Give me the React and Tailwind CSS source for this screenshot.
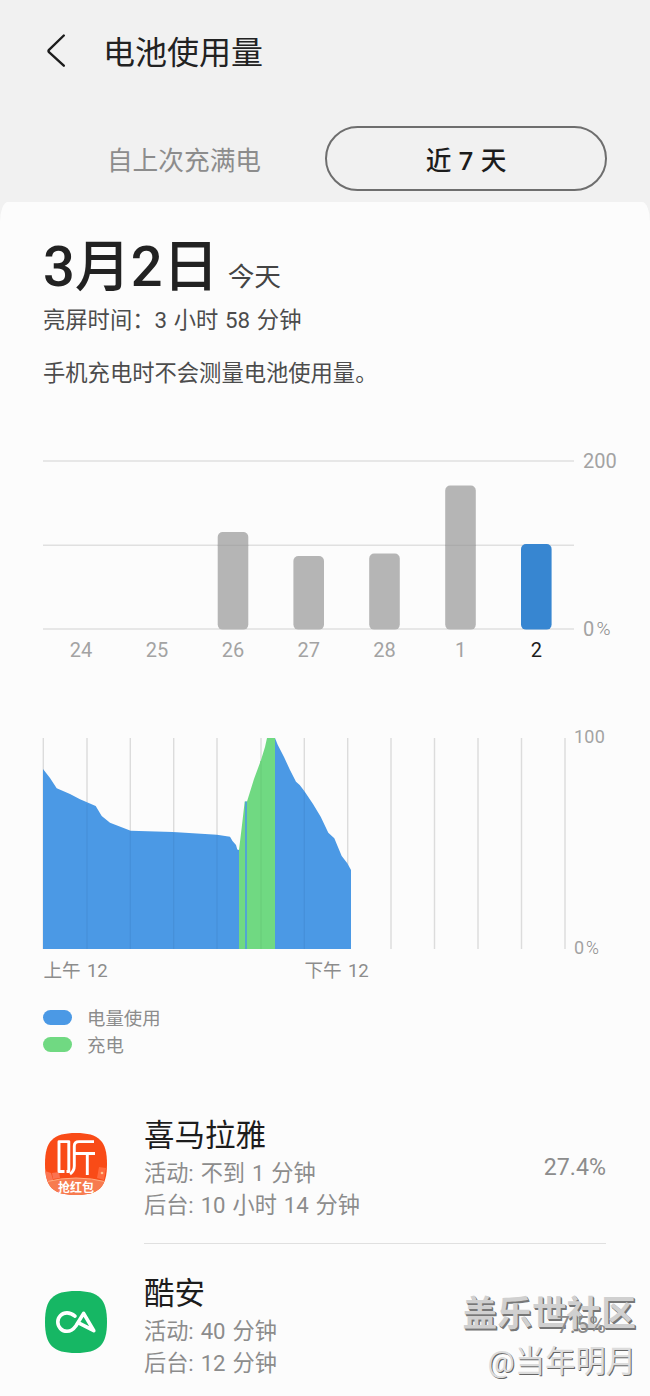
import React from 'react';

const days = [
  { label: '24', x: 81, top: null },
  { label: '25', x: 157, top: null },
  { label: '26', x: 233, top: 532 },
  { label: '27', x: 308.7, top: 556 },
  { label: '28', x: 384.5, top: 553.5 },
  { label: '1', x: 460.5, top: 485.5 },
  { label: '2', x: 536.3, top: 544, selected: true },
];

const hourLines = [43.3, 87, 130.3, 173.7, 217, 261, 304.3, 347.7, 391, 434.5, 478, 521.5, 565];

// Battery drain before charging, charging, and drain after charging
const drainBefore =
  '43,769 50,778 56.7,788.3 70,794 80,799.3 95.7,806 101.7,816 110,822.7 130.7,830.7 173,832 217,834.7 230,836.7 232.5,841 236,845 237.3,849.5 239,850 239,949 43,949';
const charging = '239,850 242,825 244.7,801.5 247,801.5 254,779 261,760 265,747 267,738 275,738 275,949 239,949';
const drainAfter =
  '275,738 277.7,744.7 284,757 290,770 296,781.7 299.7,785 304.3,791 313,804 320.7,816.7 328.3,832.7 334.3,838.3 341.7,856 347.3,863.3 351,870 351,949 275,949';

const WeekChart = () => (
  <svg className="block h-[240px] w-[650px]" viewBox="0 440 650 240" fontSize="20" fill="#a3a3a3">
    {[461, 545.3, 629].map((y) => (
      <line key={y} x1="43" x2="574" y1={y} y2={y} stroke="#e0e0e0" strokeWidth="1.4" />
    ))}
    {days.map((day) => (
      <g key={day.label}>
        {day.top && (
          <rect
            x={day.x - 15.3}
            y={day.top}
            width="30.6"
            height={629.6 - day.top}
            rx="5"
            fill={day.selected ? '#3786d1' : '#b5b5b5'}
          />
        )}
        {day.top && day.top < 544 && (
          <line x1={day.x - 15.3} x2={day.x + 15.3} y1="545.3" y2="545.3" stroke="#a9a9a9" />
        )}
        <text x={day.x} y="657.3" textAnchor="middle" fill={day.selected ? '#1c1c1c' : '#a3a3a3'}>
          {day.label}
        </text>
      </g>
    ))}
    <text x="583" y="467.5">200</text>
    <text x="583" y="635.5">0</text>
    <text x="596.5" y="635.3" fontSize="19" fontWeight="300" fill="#8c8c8c">%</text>
  </svg>
);

const DayChart = () => (
  <svg className="block h-[270px] w-[650px]" viewBox="0 725 650 270" fontSize="18.3" fill="#8c8c8c">
    {hourLines.map((x) => (
      <line key={x} x1={x} x2={x} y1="738" y2="949" stroke="#dcdcdc" strokeWidth="1.4" />
    ))}
    <polygon points={drainBefore} fill="#4b99e5" />
    <polygon points={charging} fill="#70d982" />
    <polygon points={drainAfter} fill="#4b99e5" />
    <rect x="245.2" y="801.5" width="1.6" height="147.5" fill="#4b99e5" />
    {/* Hour lines show faintly through the filled area */}
    {[87, 130.3, 173.7, 217, 304.3].map((x, i) => (
      <line key={x} x1={x} x2={x} y1={[804, 831, 833, 835, 792][i]} y2="949" stroke="#468fd8" strokeWidth="1.2" />
    ))}
    <line x1="261" x2="261" y1="761" y2="949" stroke="#69cd7b" strokeWidth="1.2" />
    <g fill="#a3a3a3">
      <text x="574" y="743.3" fontSize="18" letterSpacing="0.2">100</text>
      <text x="574" y="954.3" fontSize="18">0</text>
      <text x="586" y="954.3" fontSize="17.5" fontWeight="300" fill="#8c8c8c">%</text>
    </g>
    <text x="43.5" y="977" fontSize="18.6" wordSpacing="1.6">上午 12</text>
    <text x="304.5" y="977" fontSize="18.6" wordSpacing="1.6">下午 12</text>
  </svg>
);

const squircle = 'M31 0C54 0 62 8 62 31S54 62 31 62 0 54 0 31 8 0 31 0Z';

const XimalayaIcon = () => (
  <svg className="h-[62px] w-[62px]" viewBox="0 0 62 62">
    <defs>
      <clipPath id="app-shape">
        <path d={squircle} />
      </clipPath>
    </defs>
    <g clipPath="url(#app-shape)">
      <rect width="62" height="62" fill="#f94b17" />
      <path d="M0 38L6 40L9 50L0 50Z" fill="#fb7552" />
      <path d="M54 34L61 35L59 47L52 45Z" fill="#ff6a3d" />
      <path d="M7 40L14 39L15 45L8 46Z" fill="#fb7250" />
      <circle cx="57" cy="40" r="1.3" fill="#ffc591" />
      <path d="M0 49Q31 41 62 49V62H0Z" fill="#f77b4f" />
      <path d="M0 49Q31 41 62 49" fill="none" stroke="#ffab80" strokeWidth="1" />
    </g>
    <g fill="none" stroke="#fff" strokeWidth="2.9" strokeLinejoin="round">
      <path d="M19.5 38.5H14V8.6H23.8V38.5H21.5" />
      <path d="M49 8.6H34Q29.3 8.6 29.3 13V33Q29.3 38 25 41" />
      <path d="M30 20.5H50M42.3 20.5V42" />
    </g>
    <text x="31" y="58.6" textAnchor="middle" fontSize="12" fontWeight="700" fill="#fff">
      抢红包
    </text>
  </svg>
);

const CoolapkIcon = () => (
  <svg className="h-[62px] w-[62px]" viewBox="0 0 62 62">
    <path d={squircle} fill="#16b764" />
    <path
      d="M30 25.2C27 22.7 25 21.9 22 21.9A9.2 9.2 0 0 0 22 40.3C26 40.3 28.5 38.2 31 34.7L38.6 22.4L48.8 39.6L35 32.6"
      fill="none"
      stroke="#fff"
      strokeWidth="3.6"
      strokeLinecap="round"
      strokeLinejoin="round"
    />
  </svg>
);

const apps = [
  { name: '喜马拉雅', active: '活动: 不到 1 分钟', background: '后台: 10 小时 14 分钟', percent: '27.4%', Icon: XimalayaIcon },
  { name: '酷安', active: '活动: 40 分钟', background: '后台: 12 分钟', percent: '7.5%', Icon: CoolapkIcon },
];

const App = () => {
  return (
    <div className="relative h-[1396px] w-[650px] overflow-hidden bg-[#f1f1f1] font-['Roboto','Noto_Sans_CJK_SC',sans-serif] text-[#222]">
      <header className="flex h-[104px] items-center pl-[46px]">
        <svg className="h-9 w-5" viewBox="0 0 20 36" fill="none" stroke="#1c1c1c" strokeWidth="2.4" strokeLinecap="round" strokeLinejoin="round">
          <path d="M17.8 1.5L3 15.8Q2 17 3 18.2L17.8 31.7" />
        </svg>
        <h1 className="ml-[37px] pt-[2px] text-[32px] leading-10">电池使用量</h1>
      </header>

      <nav className="mt-[22px] flex h-[66px] px-[43px]">
        <button className="w-[282px] pt-[5px] text-[25.7px] text-[#8c8c8c]">自上次充满电</button>
        <button className="h-[65px] w-[282px] rounded-full border-2 border-[#6e6e6e] pt-[5px] text-[25.7px] font-medium [word-spacing:1px] text-[#1c1c1c]">
          近 7 天
        </button>
      </nav>

      <main className="mt-[10px] h-[1194px] rounded-t-[8px_20px] bg-[#fcfcfc]">
        <section className="flex h-[238px] flex-col px-[43px] pt-8">
          <div className="flex h-[68px] items-baseline pt-px leading-[64px]">
            <h2 className="text-[56px] font-medium">3月2日</h2>
            <span className="ml-[9px] text-[26.7px] text-[#444]">今天</span>
          </div>
          <p className="mt-[2px] text-[22.3px] leading-8 [word-spacing:1.2px] text-[#4c4c4c]">亮屏时间：3 小时 58 分钟</p>
          <p className="mt-[21px] text-[22.3px] leading-8 text-[#4c4c4c]">手机充电时不会测量电池使用量。</p>
        </section>

        <WeekChart />
        <div className="h-[45px]" />
        <DayChart />

        <ul className="mt-[9px] px-[43px] text-[18.4px] text-[#8c8c8c]">
          <li className="flex h-[27px] items-center">
            <span className="mr-[15px] h-[15px] w-[29px] rounded-full bg-[#4b99e5]" />
            <span className="pt-[3px]">电量使用</span>
          </li>
          <li className="flex h-[27px] items-center">
            <span className="mr-[15px] h-[15px] w-[29px] rounded-full bg-[#70d982]" />
            <span className="pt-[3px]">充电</span>
          </li>
        </ul>

        <ul className="mt-7">
          {apps.map(({ name, active, background, percent, Icon }) => (
            <li key={name} className="flex h-[158px] pl-[45px]">
              <div className="pt-[47px]">
                <Icon />
              </div>
              <div className="ml-[37px] flex w-[462px] items-center justify-between border-b-[1.5px] border-[#e0e0e0]">
                <div className="pt-[6px]">
                  <h3 className="text-[30.5px] leading-[42px] text-[#1c1c1c]">{name}</h3>
                  <p className="text-[22.2px] leading-8 [word-spacing:1.4px] text-[#8c8c8c]">{active}</p>
                  <p className="text-[22.2px] leading-8 [word-spacing:1.4px] text-[#8c8c8c]">{background}</p>
                </div>
                <span className="relative z-10 pt-[5px] text-[23.2px] text-[#8c8c8c]">{percent}</span>
              </div>
            </li>
          ))}
        </ul>
      </main>

      <div className="absolute right-[14px] bottom-[10px] text-right text-[#d0d0d0]">
        <p className="text-[34.7px] leading-[48px] font-bold [text-shadow:1px_1px_0_#777,1.5px_1.5px_0_#777]">盖乐世社区</p>
        <p className="text-[30.3px] leading-[48px] text-[#dcdcdc] [text-shadow:1px_1px_0_#666]">@当年明月</p>
      </div>
    </div>
  );
};

export default App;
